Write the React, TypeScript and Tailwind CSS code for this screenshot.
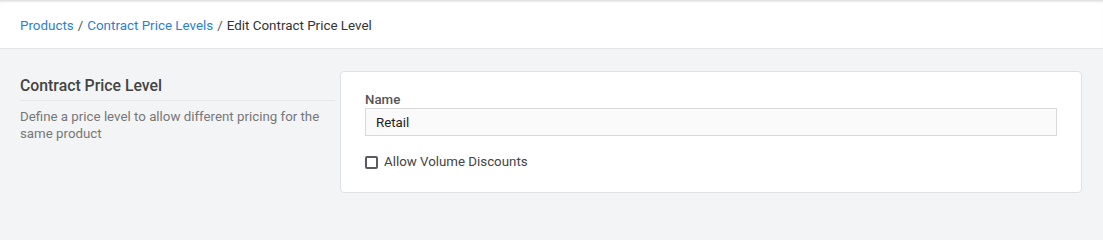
import React from "react";

export default function App() {
  return (
    <div className="min-h-screen bg-[#f3f4f6] text-[13.3px]" style={{ fontFamily: "Roboto, 'Liberation Sans', sans-serif" }}>
      <div className="relative h-[49px] bg-white border-b border-[#e3e4e6] flex items-center px-5 pt-[3px] shadow-[inset_0_3px_3px_-2px_rgba(0,0,0,0.18)]">
        <nav className="flex items-center gap-[4px] text-[13.4px] leading-none">
          <a className="text-[#2a7fd4]">Products</a>
          <span className="text-[#555]">/</span>
          <a className="text-[#2a7fd4]">Contract Price Levels</a>
          <span className="text-[#555]">/</span>
          <span className="text-[#333]">Edit Contract Price Level</span>
        </nav>
      </div>
      <div className="flex gap-[5px] pl-5 pr-[21px] pt-[22px]">
        <div className="w-[315px] shrink-0 pt-[5px]">
          <h2 className="text-[15.8px] font-medium text-[#444] leading-[19px] pb-[5px] border-b border-[#e6e7e9]">
            Contract Price Level
          </h2>
          <p className="mt-[7px] pr-[15px] text-[13.3px] leading-[17px] text-[#777]">
            Define a price level to allow different pricing for the same product
          </p>
        </div>
        <div className="flex-1 bg-white border border-[#e0e1e3] rounded-[4px] px-6 pt-[20px] pb-[22px]">
          <label className="block text-[13.3px] font-medium text-[#555] leading-[16px]">Name</label>
          <input
            readOnly
            value="Retail"
            className="w-full h-[28px] bg-[#fafafa] border border-[#d9d9d9] px-[10px] text-[13.3px] text-[#222] outline-none"
          />
          <label className="flex items-center mt-[18px] gap-[6px] text-[13.3px] text-[#444] leading-[16px]">
            <span className="w-[13px] h-[13px] border-2 border-[#5a5a66] rounded-[2px] bg-white" />
            Allow Volume Discounts
          </label>
        </div>
      </div>
    </div>
  );
}
